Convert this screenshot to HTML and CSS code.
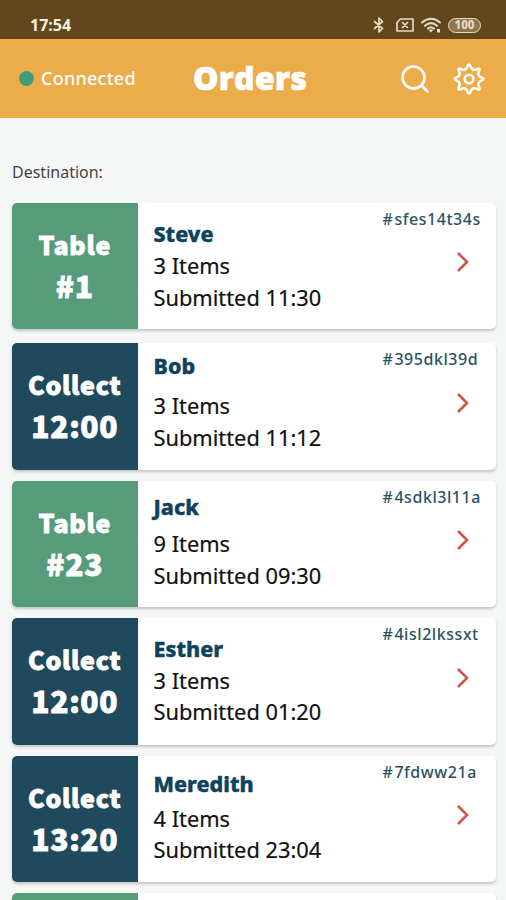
FILE: index.html
```html
<!DOCTYPE html>
<html lang="en">
<head>
<meta charset="utf-8">
<title>Orders</title>
<link rel="stylesheet" href="styles.css">
</head>
<body>
<div class="status">
  <span class="clock">17:54</span>
  <div class="status-icons">
    <svg width="12" height="18" viewBox="0 0 12 18"><path d="M1.500 5.500l8 7L6 16V2l3.500 3.500-8 7"/></svg>
    <svg width="18" height="14" viewBox="0 0 18 14"><path d="M4.500 1H17v12H1V4.500zM6.500 4.500l5 5m0-5l-5 5"/></svg>
    <svg width="21" height="16" viewBox="0 0 21 16"><path class="thick" d="M1 5.500Q10 -2 19 5.500M4 8.700Q10 3.500 16 8.700M7 11.500Q10 9 13 11.500"/><path class="fill" d="M7.500 12.500h5l-2.500 3zM16 12h3v3.500h-3z"/></svg>
    <span class="battery">100</span>
  </div>
</div>
<header class="header">
  <div class="conn"><span class="dot"></span>Connected</div>
  <h1 class="title">Orders</h1>
  <svg class="search" width="28" height="28" viewBox="0 0 28 28"><circle cx="12.500" cy="12.500" r="11"/><path d="M20.500 20.500l6 6"/></svg>
  <svg class="gear" width="32" height="32" viewBox="-16 -16 32 32"><circle r="4.300"/><path d="M-1.630 -12.430Q0 -16.500 1.630 -12.430Q3.250 -7.850 7.630 -9.930Q12 -12 9.930 -7.630Q7.850 -3.250 12.430 -1.630Q16.500 0 12.430 1.630Q7.850 3.250 9.930 7.630Q12 12 7.630 9.930Q3.250 7.850 1.630 12.430Q0 16.500 -1.630 12.430Q-3.250 7.850 -7.630 9.930Q-12 12 -9.930 7.630Q-7.850 3.250 -12.430 1.630Q-16.500 0 -12.430 -1.630Q-7.850 -3.250 -9.930 -7.630Q-12 -12 -7.630 -9.930Q-3.250 -7.850 -1.630 -12.430Z"/></svg>
</header>
<main class="main">
  <p class="label">Destination:</p>
  <article class="card first">
    <div class="tag green"><span>Table</span><b>#1</b></div>
    <div class="info"><h2 class="n39">Steve</h2><p>3 Items</p><p>Submitted 11:30</p></div>
    <div class="side"><span class="code"><i>#</i>sfes14t34s</span><svg class="chev" width="14" height="22" viewBox="0 0 14 22"><path d="M2 2l9 9-9 9"/></svg></div>
  </article>
  <article class="card">
    <div class="tag"><span>Collect</span><b>12:00</b></div>
    <div class="info"><h2 class="n32">Bob</h2><p>3 Items</p><p>Submitted 11:12</p></div>
    <div class="side"><span class="code"><i>#</i>395dkl39d</span><svg class="chev" width="14" height="22" viewBox="0 0 14 22"><path d="M2 2l9 9-9 9"/></svg></div>
  </article>
  <article class="card">
    <div class="tag green"><span>Table</span><b>#23</b></div>
    <div class="info"><h2 class="n35">Jack</h2><p>9 Items</p><p>Submitted 09:30</p></div>
    <div class="side"><span class="code"><i>#</i>4sdkl3l11a</span><svg class="chev" width="14" height="22" viewBox="0 0 14 22"><path d="M2 2l9 9-9 9"/></svg></div>
  </article>
  <article class="card">
    <div class="tag"><span>Collect</span><b>12:00</b></div>
    <div class="info tight"><h2 class="n39">Esther</h2><p>3 Items</p><p>Submitted 01:20</p></div>
    <div class="side"><span class="code"><i>#</i>4isl2lkssxt</span><svg class="chev" width="14" height="22" viewBox="0 0 14 22"><path d="M2 2l9 9-9 9"/></svg></div>
  </article>
  <article class="card">
    <div class="tag"><span>Collect</span><b>13:20</b></div>
    <div class="info tight"><h2 class="n36">Meredith</h2><p>4 Items</p><p>Submitted 23:04</p></div>
    <div class="side"><span class="code"><i>#</i>7fdww21a</span><svg class="chev" width="14" height="22" viewBox="0 0 14 22"><path d="M2 2l9 9-9 9"/></svg></div>
  </article>
  <article class="card"><div class="tag green"></div></article>
</main>
</body>
</html>
```
FILE: styles.css
```css
* { box-sizing: border-box; }
body {
  margin: 0;
  height: 900px;
  overflow: hidden;
  background: #f5f7f7;
  font-family: "Noto Sans", sans-serif;
}
h1, h2, p { margin: 0; }
svg { fill: none; stroke: #fff; stroke-linecap: round; stroke-linejoin: round; flex: none; }
.status {
  height: 39px;
  padding: 11px 25px 0 30px;
  display: flex;
  justify-content: space-between;
  align-items: flex-start;
  background: #62471c;
  color: #f7efe0;
}
.clock { font: 700 16px/28px "Noto Sans", sans-serif; }
.status-icons { display: flex; align-items: center; height: 28px; }
.status-icons svg { stroke: #e5dac6; stroke-width: 1.7; }
.status-icons svg + svg { margin-left: 11px; }
.status-icons svg + svg + svg { margin-left: 7px; }
.status-icons .thick { stroke-width: 2.1; }
.status-icons .fill { fill: #e5dac6; stroke: none; }
.battery {
  margin-left: 6px;
  width: 33px;
  height: 15px;
  border: 1.5px solid #e5dac6;
  border-radius: 8px;
  font: 800 11.5px/12px "Noto Sans", sans-serif;
  text-align: center;
  color: #e5dac6;
  background: #8d7650;
}
.header {
  height: 79px;
  padding: 0 21px 0 19px;
  display: flex;
  align-items: center;
  background: #ecac4a;
  color: #fff;
}
.conn { display: flex; align-items: center; width: 174px; padding-bottom: 1px; font-size: 18px; font-weight: 500; letter-spacing: .25px; }
.dot { width: 15px; height: 15px; margin-right: 7px; border-radius: 50%; background: #3f9f78; }
.title { flex: 1; padding-bottom: 2px; font: 800 32px/40px "Open Sans", sans-serif; letter-spacing: .3px; -webkit-text-stroke: .7px #fff; }
.search { stroke-width: 2.6; margin-right: 24px; }
.gear { stroke-width: 2.6; }
.main { height: 782px; overflow: hidden; padding: 0 10px 0 12px; }
.label { padding-top: 42px; height: 84.500px; font-size: 16px; line-height: 24px; color: #444; }
.card {
  display: flex;
  height: 126.500px;
  margin-bottom: 11px;
  border-radius: 5px;
  overflow: hidden;
  background: #fff;
  box-shadow: 0 2px 3px rgba(0, 0, 0, .2);
}
.first { margin-bottom: 14px; }
.tag {
  width: 125.500px;
  padding-top: 20px;
  display: flex;
  flex-direction: column;
  align-items: center;
  background: #1f4a5d;
  color: #fff;
  font: 900 25px/42px "Noto Sans CJK SC", sans-serif;
  letter-spacing: .7px;
  -webkit-text-stroke: .8px #fff;
}
.tag b { margin-top: -1px; font-size: 30px; font-weight: 900; }
.green { background: #589b7a; }
.info { width: 245px; padding-left: 16px; font-size: 21.800px; line-height: 32px; color: #111; -webkit-text-stroke: .2px #111; }
.info h2 { height: 47px; font-size: 21.500px; font-weight: 800; line-height: 32px; color: #0f435d; -webkit-text-stroke: .4px #0f435d; }
.tight p + p { margin-top: -1px; }
.n32 { padding-top: 7px; }
.n35 { padding-top: 10px; }
.n36 { padding-top: 12px; }
.n39 { padding-top: 15px; }
.side { flex: 1; display: flex; flex-direction: column; }
.code { height: 48.500px; padding-top: 4px; font-size: 16px; font-weight: 500; line-height: 24px; letter-spacing: .55px; color: #2b5362; }
.code i { margin-right: 1px; font-style: normal; }
.chev { margin-left: 73px; stroke: #cf5546; stroke-width: 2.6; stroke-linecap: butt; stroke-linejoin: miter; }
```
